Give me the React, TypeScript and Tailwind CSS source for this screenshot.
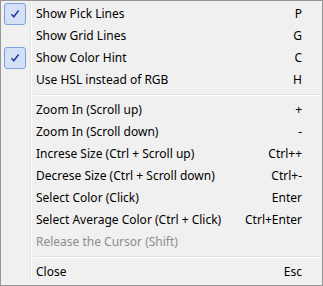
const FONT = "font-['Segoe_UI','Noto_Sans','DejaVu_Sans',sans-serif]"

type Item = {
  label: string
  shortcut?: string
  checked?: boolean
  disabled?: boolean
}

const groups: Item[][] = [
  [
    { label: 'Show Pick Lines', shortcut: 'P', checked: true },
    { label: 'Show Grid Lines', shortcut: 'G' },
    { label: 'Show Color Hint', shortcut: 'C', checked: true },
    { label: 'Use HSL instead of RGB', shortcut: 'H' },
  ],
  [
    { label: 'Zoom In (Scroll up)', shortcut: '+' },
    { label: 'Zoom In (Scroll down)', shortcut: '-' },
    { label: 'Increse Size (Ctrl + Scroll up)', shortcut: 'Ctrl++' },
    { label: 'Decrese Size (Ctrl + Scroll down)', shortcut: 'Ctrl+-' },
    { label: 'Select Color (Click)', shortcut: 'Enter' },
    { label: 'Select Average Color (Ctrl + Click)', shortcut: 'Ctrl+Enter' },
    { label: 'Release the Cursor (Shift)', disabled: true },
  ],
  [{ label: 'Close', shortcut: 'Esc' }],
]

function Check() {
  return (
    <div className="w-[22px] h-[22px] shrink-0 ml-[2px] rounded-[3px] border border-[#7f9fd8] bg-[#d4e0f6] flex items-center justify-center">
      <svg width="10" height="10" viewBox="0 0 10 10">
        <path d="M1.5 5.2 L3.8 7.8 L8.6 1.5" fill="none" stroke="#1e3e9a" strokeWidth="1.5" />
      </svg>
    </div>
  )
}

function MenuRow({ item }: { item: Item }) {
  return (
    <div className={`flex items-center h-[22px] ${item.disabled ? 'text-[#8d8d8d]' : 'text-black'}`}>
      <div className="w-[29px] h-[22px] shrink-0 flex items-center">{item.checked && <Check />}</div>
      <span className="ml-[5px] flex-1">{item.label}</span>
      {item.shortcut && <span className="mr-[20px]">{item.shortcut}</span>}
    </div>
  )
}

function Separator() {
  return (
    <div className="h-[8px] flex flex-col justify-center pl-[31px] pr-[2px]">
      <div className="h-px bg-[#e0e0e0]" />
      <div className="h-px bg-white" />
    </div>
  )
}

export default function App() {
  return (
    <div className={`w-[323px] h-[286px] ${FONT} text-[12px] leading-none`}>
      <div className="relative w-full h-full border border-[#979797] bg-[#f0f0f0] py-[2px] pl-px">
        {/* 左侧图标栏分隔线 */}
        <div className="absolute top-[2px] bottom-[2px] left-[29px] w-px bg-[#e2e3e3]" />
        <div className="absolute top-[2px] bottom-[2px] left-[30px] w-px bg-white" />
        <div className="relative">
          {groups.map((g, gi) => (
            <div key={gi}>
              {gi > 0 && <Separator />}
              {g.map((item) => (
                <MenuRow key={item.label} item={item} />
              ))}
            </div>
          ))}
        </div>
      </div>
    </div>
  )
}
